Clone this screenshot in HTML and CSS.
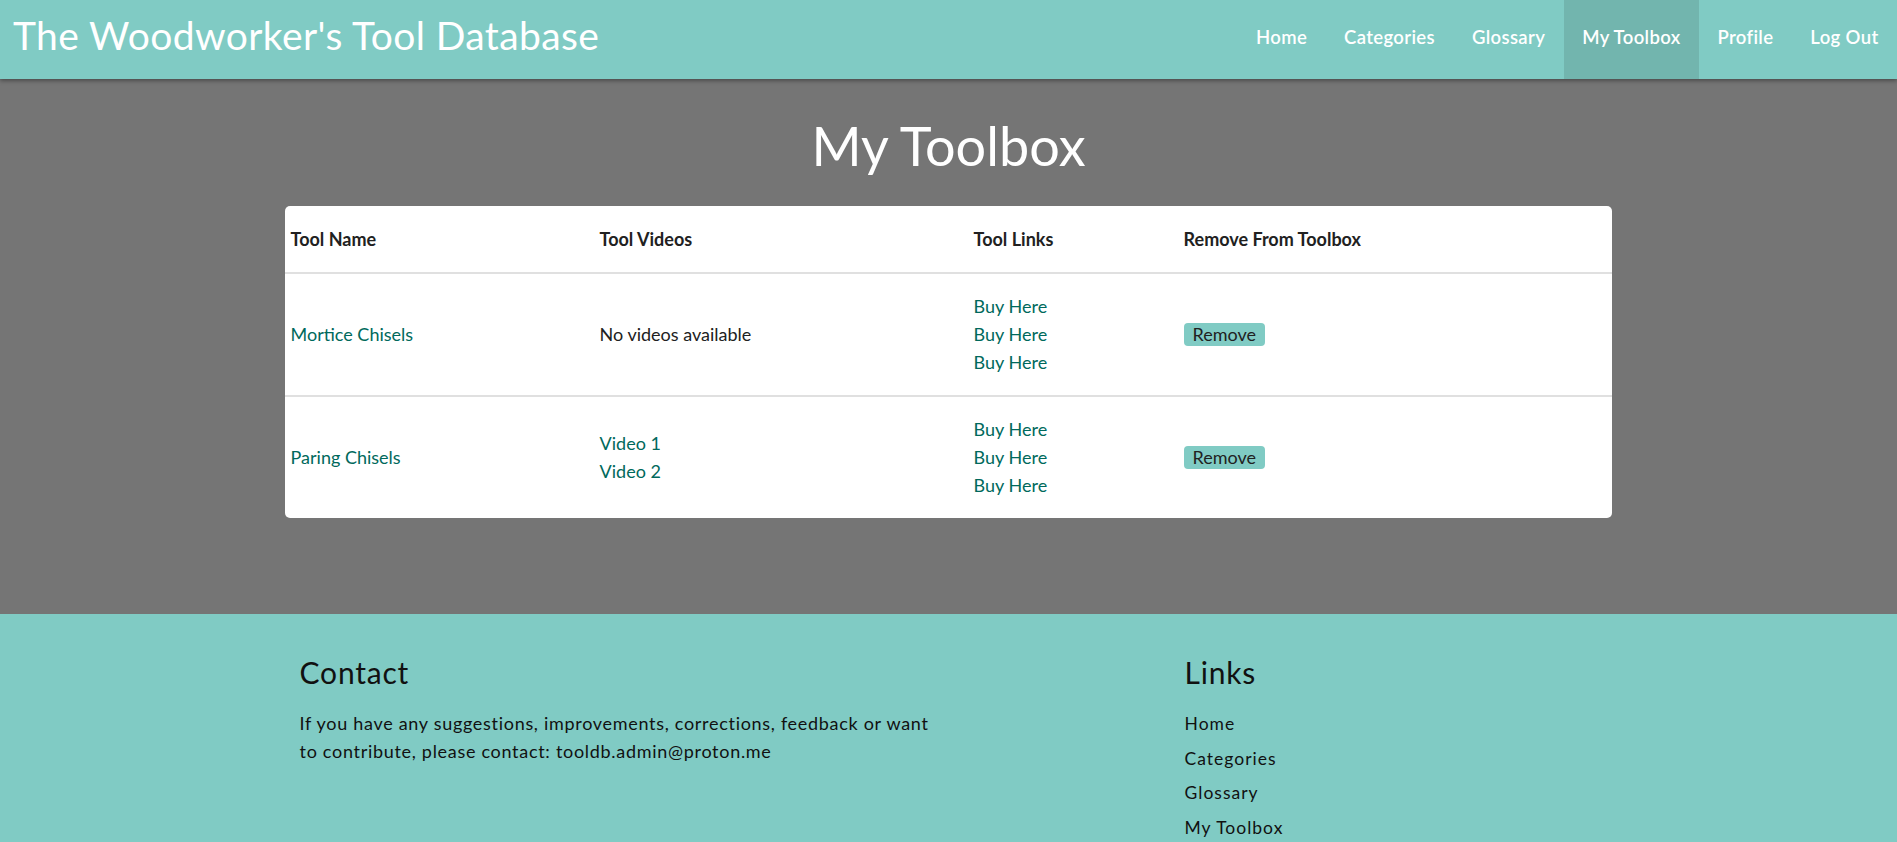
FILE: index.html
```html
<!DOCTYPE html>
<html lang="en">
<head>
<meta charset="utf-8">
<title>My Toolbox - The Woodworker's Tool Database</title>
<link rel="stylesheet" href="styles.css">
</head>
<body>
<header class="site-header">
  <a class="brand" href="#">The Woodworker's Tool Database</a>
  <nav class="main-nav">
    <a href="#" class="nav-link">Home</a>
    <a href="#" class="nav-link">Categories</a>
    <a href="#" class="nav-link">Glossary</a>
    <a href="#" class="nav-link active">My Toolbox</a>
    <a href="#" class="nav-link">Profile</a>
    <a href="#" class="nav-link">Log Out</a>
  </nav>
</header>
<main class="content">
  <h1 class="page-title">My Toolbox</h1>
  <table class="toolbox">
    <thead>
      <tr>
        <th class="col-name">Tool Name</th>
        <th class="col-videos">Tool Videos</th>
        <th class="col-links">Tool Links</th>
        <th class="col-remove">Remove From Toolbox</th>
      </tr>
    </thead>
    <tbody>
      <tr>
        <td><a href="#" class="tlink">Mortice Chisels</a></td>
        <td>No videos available</td>
        <td>
          <a href="#" class="tlink block">Buy Here</a>
          <a href="#" class="tlink block">Buy Here</a>
          <a href="#" class="tlink block">Buy Here</a>
        </td>
        <td><button class="remove-btn">Remove</button></td>
      </tr>
      <tr>
        <td><a href="#" class="tlink">Paring Chisels</a></td>
        <td>
          <a href="#" class="tlink block">Video 1</a>
          <a href="#" class="tlink block">Video 2</a>
        </td>
        <td>
          <a href="#" class="tlink block">Buy Here</a>
          <a href="#" class="tlink block">Buy Here</a>
          <a href="#" class="tlink block">Buy Here</a>
        </td>
        <td><button class="remove-btn">Remove</button></td>
      </tr>
    </tbody>
  </table>
</main>
<footer class="site-footer">
  <div class="footer-inner">
    <section class="footer-contact">
      <h2 class="footer-title">Contact</h2>
      <p class="footer-text">If you have any suggestions, improvements, corrections, feedback or want to contribute, please contact: tooldb.admin@proton.me</p>
    </section>
    <section class="footer-links">
      <h2 class="footer-title">Links</h2>
      <ul class="footer-list">
        <li><a href="#">Home</a></li>
        <li><a href="#">Categories</a></li>
        <li><a href="#">Glossary</a></li>
        <li><a href="#">My Toolbox</a></li>
      </ul>
    </section>
  </div>
</footer>
</body>
</html>
```
FILE: styles.css
```css
* { box-sizing: border-box; }

html, body {
  margin: 0;
  padding: 0;
}

body {
  background: #757575;
  font-family: "Lato", "Liberation Sans", sans-serif;
  color: #212121;
}

.site-header {
  position: relative;
  z-index: 2;
  height: 79px;
  background: #80cbc4;
  display: flex;
  align-items: center;
  justify-content: space-between;
  box-shadow: 0 2px 4px rgba(0, 0, 0, 0.35);
}

.brand {
  padding-left: 13px;
  padding-bottom: 9px;
  color: #fff;
  text-decoration: none;
  font-family: "Lato", sans-serif;
  font-size: 39px;
  letter-spacing: 0.4px;
  font-weight: 400;
}

.main-nav {
  display: flex;
  align-self: stretch;
}

.nav-link {
  display: flex;
  align-items: center;
  padding: 0 18.5px 6px;
  color: #fff;
  text-decoration: none;
  font-family: "Lato", sans-serif;
  font-size: 18.5px;
  letter-spacing: 0.35px;
  font-weight: 600;
}

.nav-link.active {
  background: #72b5ae;
}

.content {
  padding: 24px 0 96px;
}

.page-title {
  margin: 0 0 17px;
  text-align: center;
  color: #fff;
  font-family: "Lato", sans-serif;
  font-weight: 400;
  font-size: 54px;
  line-height: 86px;
}

.toolbox {
  width: 70%;
  margin: 0 auto;
  background: #fff;
  border-collapse: collapse;
  border-radius: 5px;
  overflow: hidden;
  font-size: 18px;
}

.toolbox th {
  text-align: left;
  font-weight: 700;
  height: 67px;
  padding: 0 6px;
  color: #212121;
}

.toolbox td {
  padding: 18px 6px 19px;
  vertical-align: middle;
  border-top: 2px solid #e0e0e0;
  line-height: 28px;
}

.col-name { width: 309px; }
.col-videos { width: 374px; }
.col-links { width: 210px; }

.tlink {
  color: #00695c;
  text-decoration: none;
}

.tlink.block {
  display: block;
}

.remove-btn {
  font-family: "Lato", sans-serif;
  font-size: 18px;
  line-height: 21px;
  padding: 1px 9px;
  border: none;
  border-radius: 4px;
  background: #80cbc4;
  color: #212121;
  cursor: pointer;
}

.site-footer {
  background: #80cbc4;
  padding: 40px 0 60px;
}

.footer-inner {
  width: 70%;
  margin: 0 auto;
  padding: 0 15px;
  display: grid;
  grid-template-columns: 870px 1fr;
  column-gap: 15px;
}

.footer-title {
  margin: 0 0 19px;
  font-family: "Lato", sans-serif;
  font-weight: 400;
  font-size: 30px;
  line-height: 36px;
  letter-spacing: 0.8px;
  color: #111;
}

.footer-text {
  margin: 0;
  max-width: 630px;
  font-size: 18px;
  line-height: 28px;
  color: #111;
  letter-spacing: 0.7px;
}

.footer-list {
  list-style: none;
  margin: -2px 0 0;
  padding: 0;
}

.footer-list li {
  line-height: 34.5px;
}

.footer-list a {
  color: #111;
  text-decoration: none;
  font-size: 17.5px;
  letter-spacing: 1px;
}
```
